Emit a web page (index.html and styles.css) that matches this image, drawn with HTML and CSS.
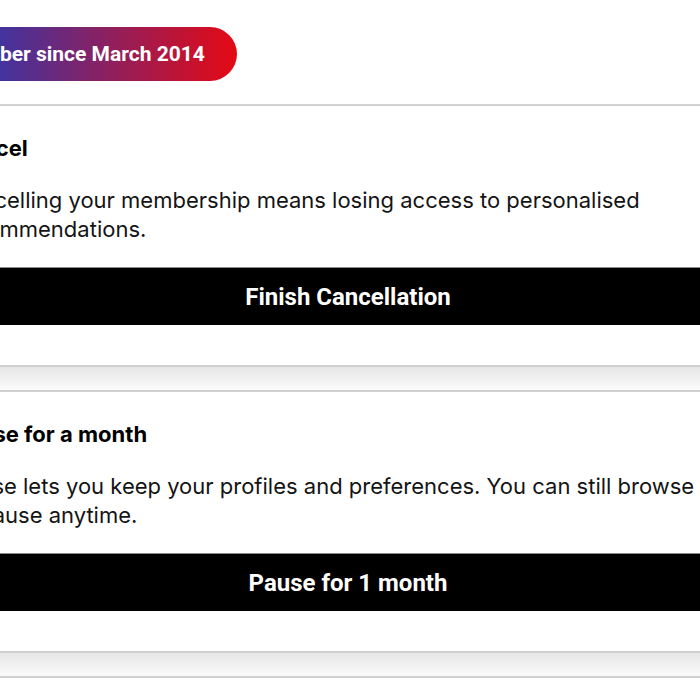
FILE: index.html
```html
<!DOCTYPE html>
<html lang="en">
<head>
  <meta charset="UTF-8" />
  <meta name="viewport" content="width=device-width, initial-scale=1.0" />
  <title>Cancel membership</title>
  <link rel="stylesheet" href="styles.css">
</head>
<body>
  <div class="page">
    <div class="badge">Member since March 2014</div>

    <div class="line"></div>

    <!-- cancel -->
    <section class="card">
      <h3>Cancel</h3>
      <p>Cancelling your membership means losing access to personalised recommendations.</p>
      <button class="action">Finish Cancellation</button>
    </section>

    <div class="divider"></div>

    <!-- pause -->
    <section class="card">
      <h3>Pause for a month</h3>
      <p>Pause lets you keep your profiles and preferences. You can still browse and unpause anytime.</p>
      <button class="action">Pause for 1 month</button>
    </section>

    <div class="divider"></div>
  </div>
</body>
</html>
```

FILE: styles.css
```css
html, body {
  margin: 0;
  padding: 0;
  background: #fff;
  overflow: hidden;
}
body {
  font-family: Inter, "Liberation Sans", sans-serif;
  color: #141414;
}
.page {
  width: 840px;
  margin-left: -72px;
  padding-top: 27px;
}
.badge {
  display: inline-block;
  height: 54px;
  line-height: 54px;
  padding: 0 32px 0 24px;
  border-radius: 27px;
  background: linear-gradient(to right, #1240c8, #e50914);
  color: #fff;
  font-family: Roboto, sans-serif;
  font-weight: 700;
  font-size: 21px;
  margin-bottom: 23px;
}
.line {
  height: 2px;
  background: #d2d2d2;
}
.card {
  padding: 28px 25px 40px;
}
.card h3 {
  margin: 0;
  font-size: 22px;
  line-height: 28px;
  font-weight: 700;
  color: #000;
}
.card p {
  margin: 24px 0 0;
  font-size: 22px;
  line-height: 29px;
}
button.action {
  display: block;
  width: 100%;
  height: 58px;
  margin-top: 23px;
  background: #000;
  color: #fff;
  border: none;
  border-top: 1px solid #8a8a8a;
  font-family: Roboto, sans-serif;
  font-weight: 700;
  font-size: 24px;
  cursor: pointer;
}
.divider {
  height: 23px;
  border-top: 2px solid #d0d0d0;
  border-bottom: 2px solid #d0d0d0;
  background: linear-gradient(to bottom, #e6e6e6, #fbfbfb);
}
```
